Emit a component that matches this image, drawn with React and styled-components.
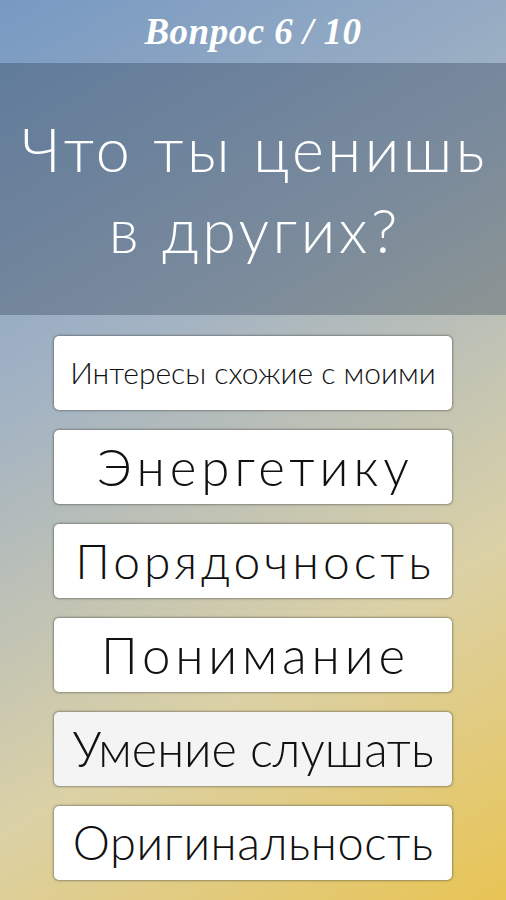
import styled, { createGlobalStyle } from "styled-components";

const GlobalStyle = createGlobalStyle`
    html, body {
        margin: 0;
        padding: 0;
    }
    body {
        font-family: Lato, "Open Sans", sans-serif;
    }
`;

const answers = [
    { text: "Интересы схожие с моими", size: 30, spacing: 0 },
    { text: "Энергетику", size: 51, spacing: 5 },
    { text: "Порядочность", size: 48, spacing: 4 },
    { text: "Понимание", size: 51, spacing: 4.8 },
    { text: "Умение слушать", size: 48.5, spacing: 0, selected: true },
    { text: "Оригинальность", size: 47, spacing: 0.6 },
];

const App = () => {
    return (
        <Screen>
            <GlobalStyle />
            <Header>
                <Title>Вопрос 6 / 10</Title>
            </Header>
            <QuestionPanel>
                <Question>Что ты ценишь<br />в других?</Question>
            </QuestionPanel>
            <AnswerList>
                {answers.map((a) => (
                    <AnswerButton
                        key={a.text}
                        $selected={a.selected}
                        $size={a.size}
                        $spacing={a.spacing}
                    >
                        {a.text}
                    </AnswerButton>
                ))}
            </AnswerList>
        </Screen>
    );
};

const Screen = styled.div`
    width: 506px;
    height: 900px;
    overflow: hidden;
    display: flex;
    flex-direction: column;
    background: linear-gradient(150deg, #7799c2 0%, #a3b3c3 35%, #dbd1a6 70%, #e8c454 100%);
`;

const Header = styled.div`
    height: 63px;
    display: flex;
    align-items: center;
    justify-content: center;
`;

const Title = styled.h1`
    margin: 0;
    font-family: "Liberation Serif", "DejaVu Serif", serif;
    font-style: italic;
    font-weight: bold;
    font-size: 37px;
    color: #fff;
    letter-spacing: 0.5px;
`;

const QuestionPanel = styled.div`
    height: 252px;
    background: rgba(30, 45, 65, 0.3);
    display: flex;
    align-items: center;
    justify-content: center;
`;

const Question = styled.h2`
    margin: 0;
    font-family: Lato, sans-serif;
    font-weight: 300;
    font-size: 61px;
    line-height: 81px;
    letter-spacing: 3.5px;
    padding-left: 3.5px;
    color: #fff;
    text-align: center;
    white-space: nowrap;
`;

const AnswerList = styled.div`
    display: flex;
    flex-direction: column;
    gap: 20px;
    padding: 21px 54px 0;
`;

const AnswerButton = styled.div`
    height: 74px;
    box-sizing: border-box;
    border-radius: 5px;
    background: ${(p) => (p.$selected ? "#f4f4f4" : "#fff")};
    box-shadow: 0 0 2px 1px rgba(60, 60, 60, 0.45);
    display: flex;
    align-items: center;
    justify-content: center;
    font-family: Lato, sans-serif;
    font-weight: 300;
    font-size: ${(p) => p.$size}px;
    letter-spacing: ${(p) => p.$spacing}px;
    padding-left: ${(p) => p.$spacing}px;
    padding-bottom: 2px;
    color: #111;
    white-space: nowrap;
`;

export default App;
